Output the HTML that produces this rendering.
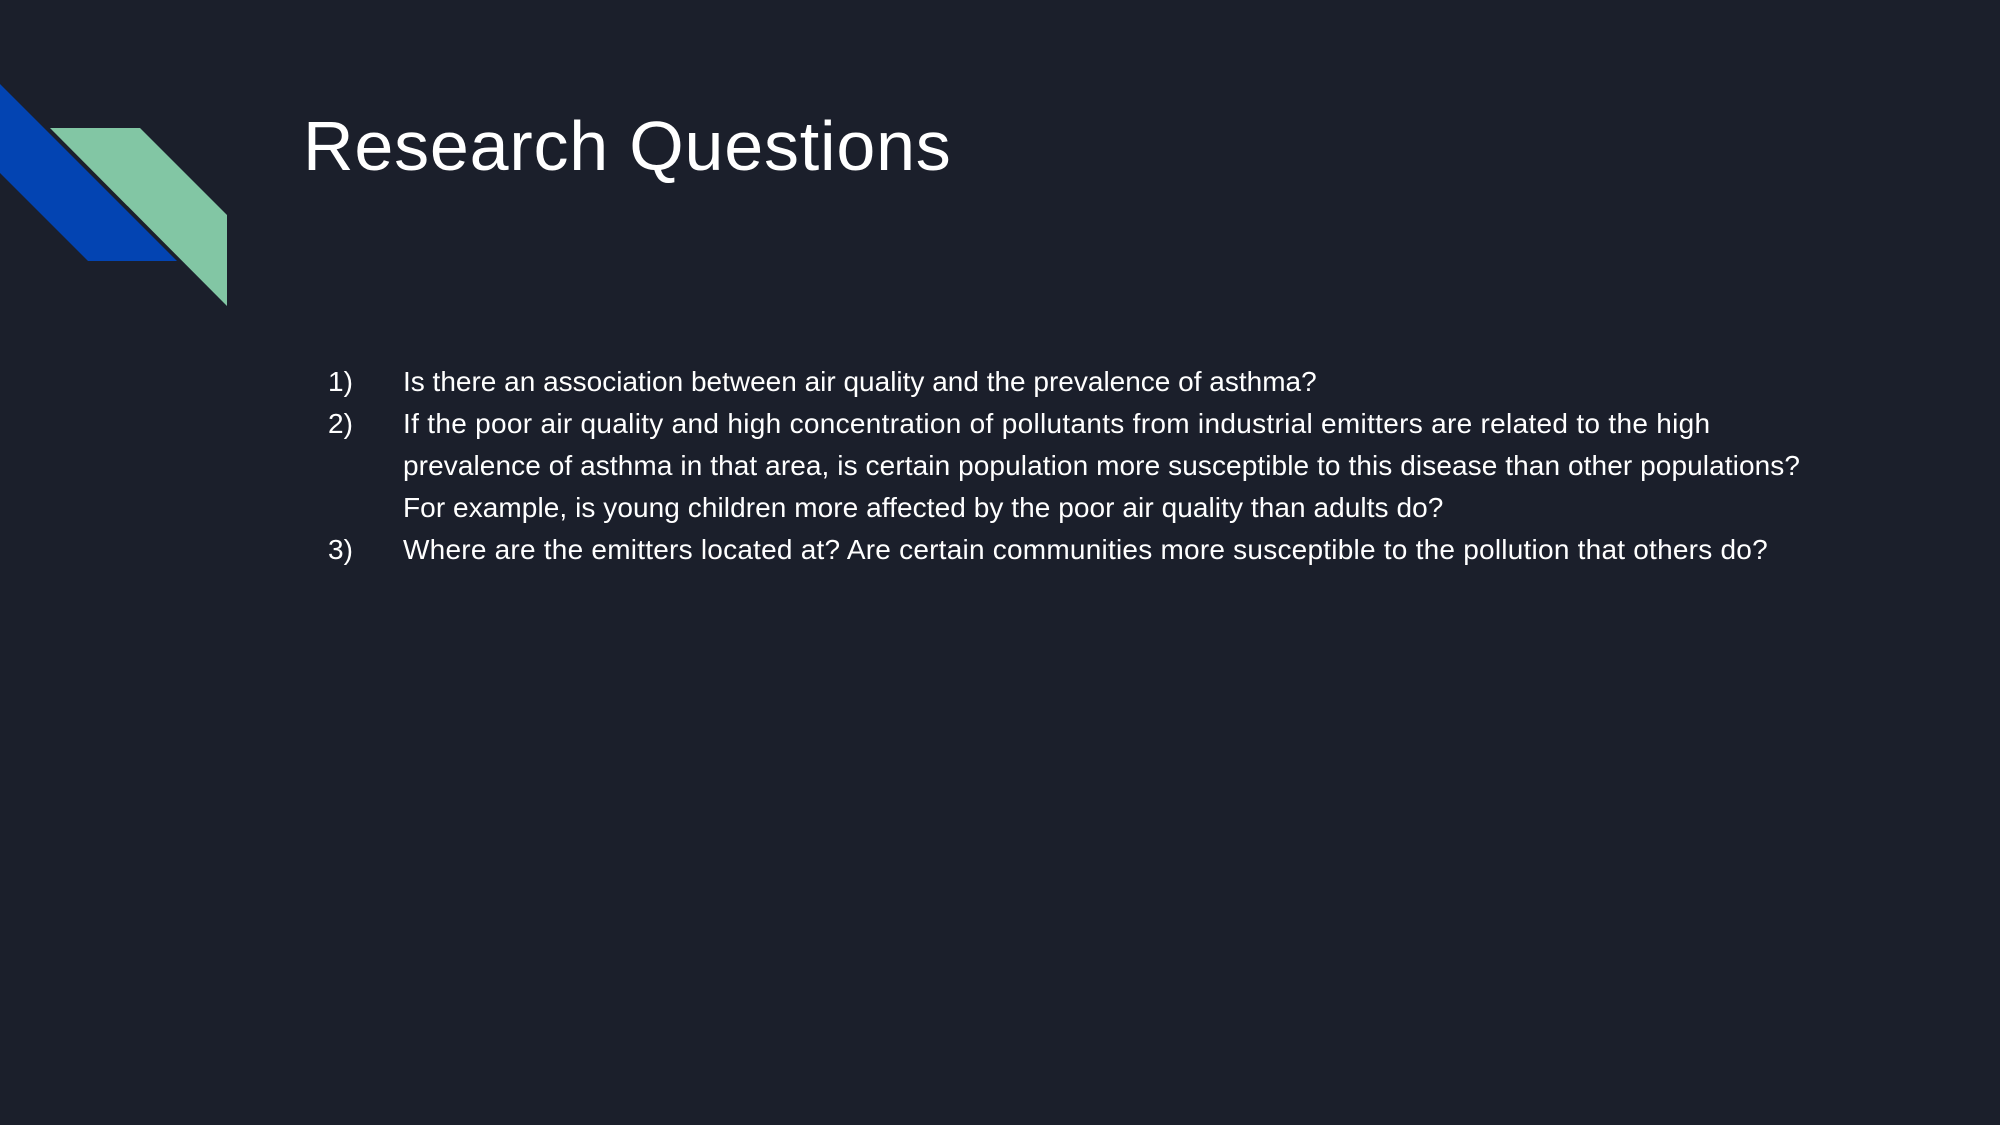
<!DOCTYPE html>
<html><head><style>
body{margin:0;width:2000px;height:1125px;background:#1b1f2b;overflow:hidden;position:relative;font-family:"Liberation Sans",sans-serif;color:#fff}
h1{position:absolute;left:303px;top:106px;margin:0;font-weight:normal;font-size:70px;letter-spacing:0.8px}
.l{position:absolute;font-size:28px;line-height:42px;white-space:nowrap}
</style></head><body>
<svg width="260" height="320" style="position:absolute;left:0;top:0">
<polygon points="0,84 177,261 88,261 0,173" fill="#0344b2"/>
<polygon points="50,128 140,128 227,215 227,306" fill="#82c6a4"/>
</svg>
<h1>Research Questions</h1>
<div class="l" style="left:328px;top:361px">1)</div>
<div class="l" style="left:403px;top:361px">Is there an association between air quality and the prevalence of asthma?</div>
<div class="l" style="left:328px;top:403px">2)</div>
<div class="l" style="left:403px;top:403px;letter-spacing:0.3px">If the poor air quality and high concentration of pollutants from industrial emitters are related to the high</div>
<div class="l" style="left:403px;top:445px;letter-spacing:0.09px">prevalence of asthma in that area, is certain population more susceptible to this disease than other populations?</div>
<div class="l" style="left:403px;top:487px;letter-spacing:0.07px">For example, is young children more affected by the poor air quality than adults do?</div>
<div class="l" style="left:328px;top:529px">3)</div>
<div class="l" style="left:403px;top:529px;letter-spacing:0.23px">Where are the emitters located at? Are certain communities more susceptible to the pollution that others do?</div>
</body></html>
